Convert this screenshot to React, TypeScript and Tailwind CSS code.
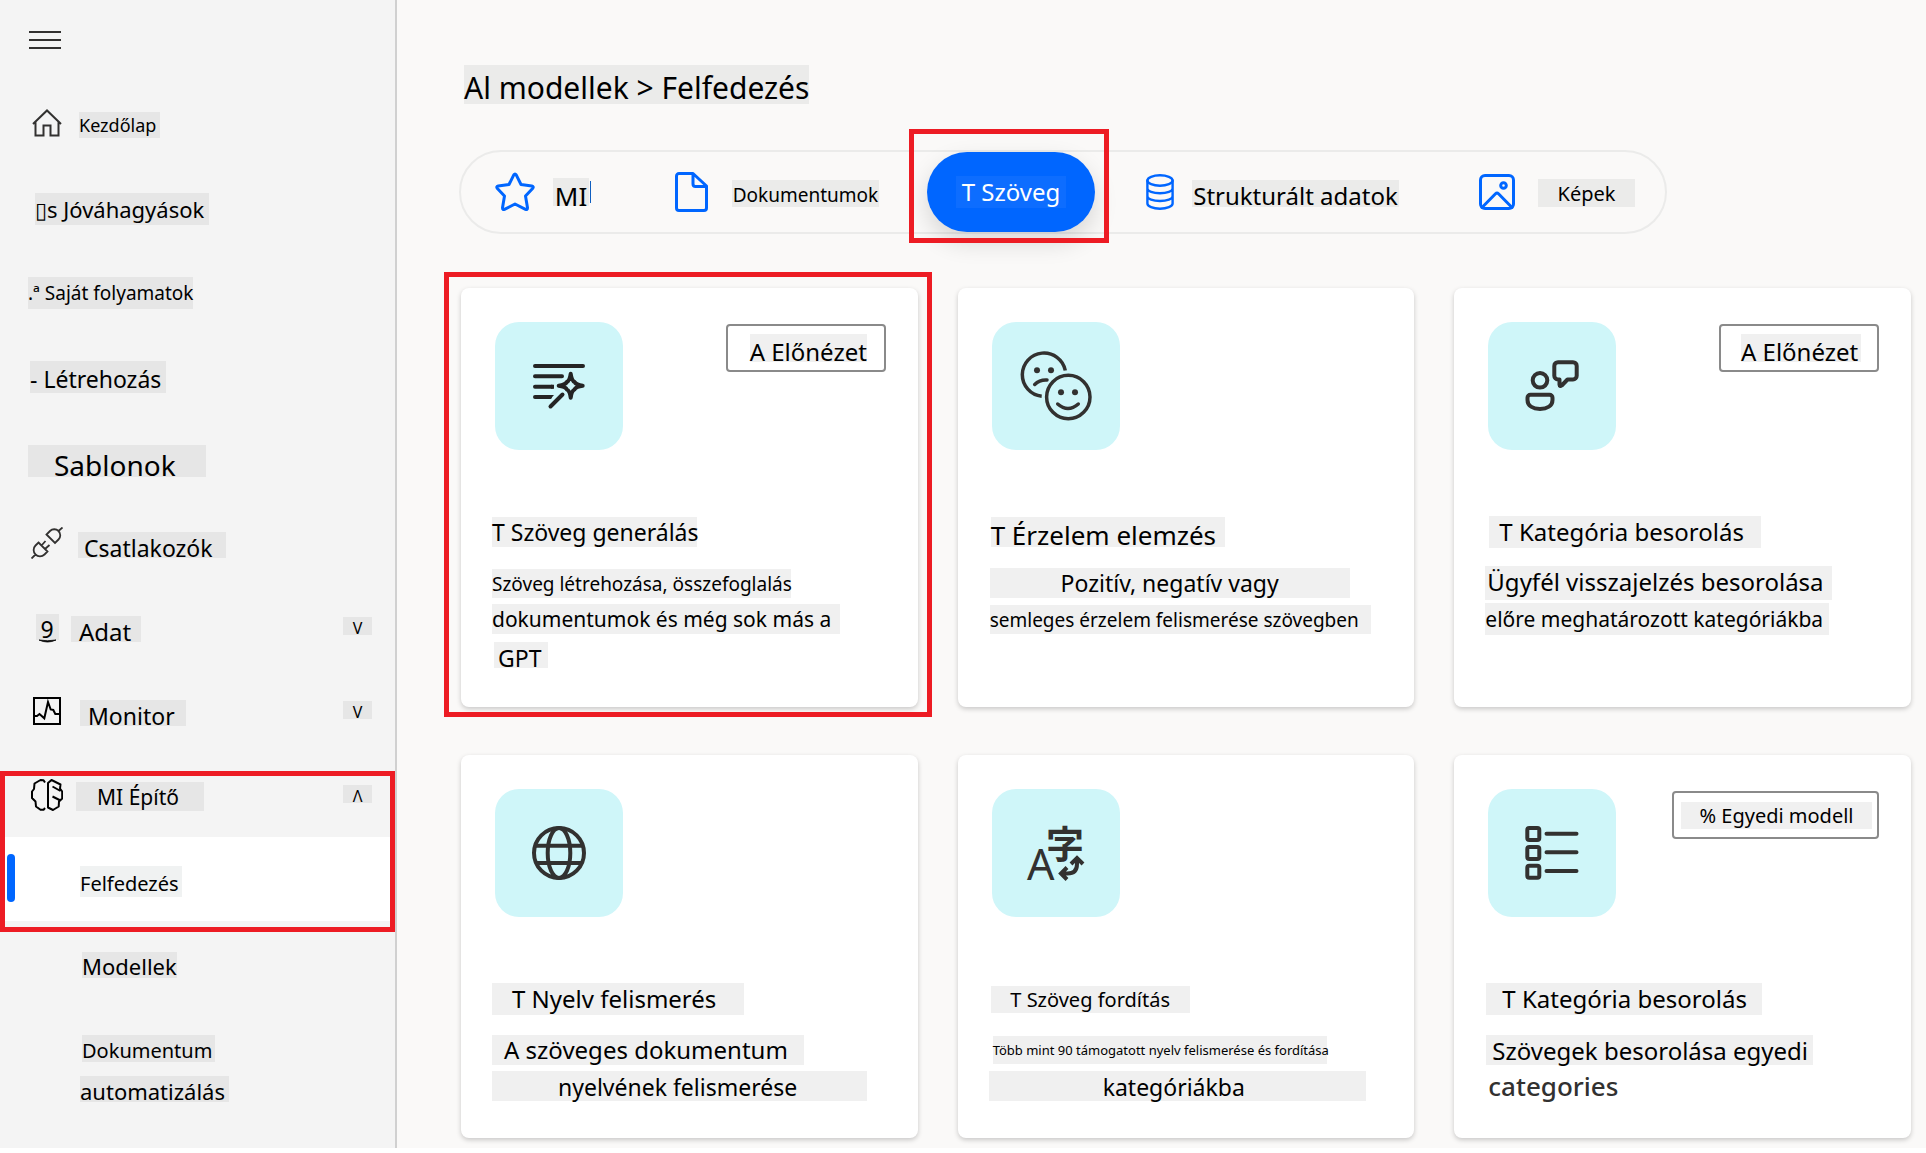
import type { ReactNode } from "react";

/* ---------- shared pieces ---------- */

function Tag({ className, children }: { className: string; children: ReactNode }) {
  return <span className={`block shrink-0 whitespace-nowrap ${className}`}>{children}</span>;
}

/* ---------- sidebar icons ---------- */

const HomeIcon = () => (
  <svg width="30" height="28" viewBox="0 0 30 28" fill="none" stroke="#323130" strokeWidth="2" aria-hidden="true">
    <path d="M1 15 15 1.5 29 15M3.5 13v13.500H11.500V16.500H18.500V26.500H26.500V13" />
  </svg>
);

const PlugIcon = () => (
  <svg width="32" height="32" viewBox="0 0 32 32" fill="none" stroke="#323130" strokeWidth="1.800" aria-hidden="true">
    <path d="M15.500 7.500 24 16l3.500-3.500A6 6 0 0 0 19 4ZM27.500 4 31.500 0.500" />
    <path d="M7.500 15.500l9 9-3 3A6.200 6.200 0 0 1 4.500 18.500ZM10.500 18.500l4-4.500M14 22l4.500-4M4.500 27.500l-4 4" />
  </svg>
);

const DataIcon = () => (
  <span className="relative block h-[26px] w-[23px] bg-[#e6e6e6] text-center text-[23px] leading-[30px] text-black">
    9
    <svg className="absolute -bottom-[3px] left-[3px]" width="17" height="4" viewBox="0 0 17 4" aria-hidden="true">
      <path d="M0 1Q8.500 5 17 1Q8.500 2.500 0 1Z" stroke="#000" strokeWidth="0.800" />
    </svg>
  </span>
);

const MonitorIcon = () => (
  <svg width="28" height="28" viewBox="0 0 28 28" fill="none" stroke="#000" strokeWidth="2" aria-hidden="true">
    <rect x="1" y="1" width="26" height="26" />
    <path d="M1 19h3l2.500-2 4.800 4.300L15 5l2.700 7.500 2.600 0.500 2 4H27" />
  </svg>
);

const BrainIcon = () => (
  <svg width="32" height="32" viewBox="0 0 32 32" fill="none" stroke="#000" strokeWidth="2" strokeLinejoin="round" aria-hidden="true">
    <path d="M14 3.500 12.500 1.200 9.500 1 3.500 4.500 3 10 1 12.500V19l3.500 3.500 0.500 5 4.500 3.300h3L14 29" />
    <path d="M17 4 20.500 1l9 4.500-0.500 4 2.200 3v7L28 22.500l-0.300 5L22 31l-5-2.500ZM21.500 7.500l8 4.500M21.500 17.500l8 4" />
  </svg>
);

/* ---------- sidebar ---------- */

type NavEntry = { text: string; label: string; icon?: ReactNode; row?: string; caret?: "V" | "Λ" };

const NAV: NavEntry[] = [
  { text: "Kezdőlap", icon: <HomeIcon />, label: "ml-4 h-[26px] w-[81px] text-lg leading-[26px]" },
  { text: "▯s Jóváhagyások", row: "pl-[35px]", label: "h-8 w-[174px] text-[22px] leading-8" },
  { text: ".ª Saját folyamatok", row: "pl-7", label: "h-8 w-[165px] text-[19px] leading-8" },
  { text: "- Létrehozás", row: "pl-[30px]", label: "h-8 w-[136px] text-[23px] leading-9" },
  { text: "Sablonok", row: "pl-7", label: "h-8 w-[178px] pl-[26px] text-[28px] leading-10" },
  { text: "Csatlakozók", icon: <PlugIcon />, label: "ml-[15px] h-[26px] w-[148px] pl-1.5 text-[23px] leading-8" },
  { text: "Adat", icon: <DataIcon />, caret: "V", label: "ml-2 h-[26px] w-[70px] pl-2 text-2xl leading-8" },
  { text: "Monitor", icon: <MonitorIcon />, caret: "V", label: "ml-[17px] h-[26px] w-[106px] pl-2 text-[23px] leading-8" },
];

function NavButton({ text, label, icon, row = "pl-[31px]", caret }: NavEntry) {
  return (
    <button type="button" className={`flex h-[84px] w-full items-center pt-[3px] pr-[23px] text-left ${row}`}>
      {icon && <span className="mb-[3px] flex w-8 shrink-0 items-center justify-center">{icon}</span>}
      <Tag className={`bg-[#e6e6e6] ${label}`}>{text}</Tag>
      {caret && (
        <span className="mb-1.5 ml-auto block h-[18px] w-[29px] bg-[#e6e6e6] text-center text-base leading-[22px]" aria-hidden="true">
          {caret}
        </span>
      )}
    </button>
  );
}

function Sidebar() {
  return (
    <nav aria-label="Navigáció" className="w-[397px] shrink-0 border-r-2 border-[#d0d0d0] bg-[#f4f4f4]">
      <div className="h-[81px] pt-[31px] pl-[29px]">
        <button type="button" aria-label="Menü" className="flex w-8 flex-col gap-1.5">
          <span className="h-0.5 w-full bg-[#323130]" />
          <span className="h-0.5 w-full bg-[#323130]" />
          <span className="h-0.5 w-full bg-[#323130]" />
        </button>
      </div>
      {NAV.map((item) => (
        <NavButton key={item.text} {...item} />
      ))}
      <div className="relative">
        <NavButton text="MI Építő" icon={<BrainIcon />} caret="Λ" label="ml-[13px] h-[29px] w-[128px] pl-[21px] text-[21px] leading-[30px]" />
        <a href="#felfedezes" aria-current="page" className="flex h-[84px] items-center bg-white pt-[3px] pl-[7px]">
          <span className="mb-[5px] h-12 w-2 rounded-full bg-[#0066ff]" />
          <Tag className="mt-px ml-[65px] h-[31px] w-[102px] bg-[#f0f2f2] text-xl leading-9">Felfedezés</Tag>
        </a>
        <div className="pointer-events-none absolute inset-x-0 top-[18px] -bottom-[11px] border-[5px] border-[#ed1c24]" />
      </div>
      <a href="#modellek" className="flex h-[84px] items-center pt-[3px] pl-[82px]">
        <Tag className="h-[26px] w-[95px] bg-[#e6e6e6] text-[22px] leading-7">Modellek</Tag>
      </a>
      <a href="#automatizalas" className="flex flex-col items-start gap-3.5 pt-[30px] pb-8 pl-20">
        <Tag className="ml-0.5 h-[27px] w-[133px] bg-[#e6e6e6] text-xl leading-8">Dokumentum</Tag>
        <Tag className="h-[26px] w-[149px] bg-[#e6e6e6] text-[22px] leading-[30px]">automatizálás</Tag>
      </a>
    </nav>
  );
}

/* ---------- tabs ---------- */

const blueIcon = { fill: "none", stroke: "#0066ff", strokeWidth: 3, strokeLinejoin: "round", strokeLinecap: "round" } as const;

const StarIcon = () => (
  <svg width="40" height="40" viewBox="0 0 40 40" {...blueIcon} aria-hidden="true" className="shrink-0">
    <path d="M18.800 2.800q1.200-1.800 2.400 0L26 12.500 36.800 14q2.400 0.600 0.800 2.400L30.500 24 32.500 35.800q0 2.400-2 1.600L20 32 9.500 37.400q-2 0.800-2-1.600L9.500 24 2.400 16.400Q0.800 14.600 3.200 14L14 12.500Z" />
  </svg>
);

const FileIcon = () => (
  <svg width="33" height="40" viewBox="0 0 33 40" {...blueIcon} aria-hidden="true" className="shrink-0">
    <path d="M4 1.500h14L31.500 14v22a2.500 2.500 0 0 1-2.500 2.500H4A2.500 2.500 0 0 1 1.500 36V4A2.500 2.500 0 0 1 4 1.500ZM18 1.500V12a2.500 2.500 0 0 0 2.500 2.500h11" />
  </svg>
);

const DatabaseIcon = () => (
  <svg width="28" height="36" viewBox="0 0 28 36" {...blueIcon} strokeWidth="2.400" aria-hidden="true" className="shrink-0">
    <ellipse cx="14" cy="6.500" rx="12.600" ry="5.200" />
    <path d="M1.400 6.500v23c0 2.900 5.600 5.200 12.600 5.200s12.600-2.300 12.600-5.200v-23M1.400 14.500c0 2.700 5.600 4.800 12.600 4.800s12.600-2.100 12.600-4.800M1.400 22.200c0 2.700 5.600 4.800 12.600 4.800s12.600-2.100 12.600-4.800" />
  </svg>
);

const PictureIcon = () => (
  <svg width="36" height="36" viewBox="0 0 36 36" {...blueIcon} aria-hidden="true" className="shrink-0">
    <rect x="1.500" y="1.500" width="33" height="33" rx="4.500" />
    <circle cx="24.500" cy="11.500" r="2.800" />
    <path d="M3 33.500 16.500 19.800q1.500-1.500 3 0L33 33.500" />
  </svg>
);

function Tabs() {
  return (
    <div role="tablist" aria-label="Modelltípusok" className="mt-[46px] flex h-[84px] w-fit items-center rounded-full border-2 border-[#ebebea] pr-[30px] pl-[34px]">
      <button type="button" role="tab" aria-selected="false" className="mr-[84px] flex items-center">
        <StarIcon />
        <Tag className="ml-[18px] h-7 w-9 bg-[#ebebea] text-[26px] leading-9">MI</Tag>
        <span className="ml-px h-[22px] w-px bg-[#0f5fc0]" />
      </button>
      <button type="button" role="tab" aria-selected="false" className="mr-12 flex items-center">
        <FileIcon />
        <Tag className="mt-0.5 ml-6 h-[27px] w-[147px] bg-[#ebebea] text-[19px] leading-[30px]">Dokumentumok</Tag>
      </button>
      <div className="relative mr-[51px]">
        <button
          type="button"
          role="tab"
          aria-selected="true"
          className="flex h-20 w-[168px] items-center justify-center rounded-full bg-[#0066ff] shadow-[0_10px_24px_rgba(0,0,0,0.14)]"
        >
          <Tag className="h-8 w-[110px] bg-[#0d6dff] text-center text-2xl leading-8 text-white">T Szöveg</Tag>
        </button>
        <div className="pointer-events-none absolute -top-[23px] -right-3.5 -bottom-[11px] -left-[18px] border-[5px] border-[#ed1c24]" />
      </div>
      <button type="button" role="tab" aria-selected="false" className="mr-20 flex items-center">
        <DatabaseIcon />
        <Tag className="mt-0.5 ml-[18px] h-[27px] w-[207px] bg-[#ebebea] text-2xl leading-8">Strukturált adatok</Tag>
      </button>
      <button type="button" role="tab" aria-selected="false" className="flex items-center">
        <PictureIcon />
        <Tag className="mt-0.5 ml-[23px] h-7 w-[97px] bg-[#ebebea] text-center text-xl leading-[30px]">Képek</Tag>
      </button>
    </div>
  );
}

/* ---------- card icons, drawn on the 128px tile ---------- */

function Tile({ color = "#323130", width = 4, children }: { color?: string; width?: number; children: ReactNode }) {
  return (
    <svg
      className="size-32 shrink-0 rounded-3xl bg-[#cff6f9]"
      viewBox="0 0 128 128"
      fill="none"
      stroke={color}
      strokeWidth={width}
      strokeLinecap="round"
      strokeLinejoin="round"
      aria-hidden="true"
    >
      {children}
    </svg>
  );
}

const GenerateTile = () => (
  <Tile color="#242424">
    <path d="M40 44H88M40 54.300H67M55.500 84.500 67.500 72.500" />
    <path d="M57 64.700H40M55 75H40" />
    <path d="M56 62.700h3v4h-3zM55 73h4l-3.500 4H55z" fill="#242424" stroke="none" />
    <path d="M75.700 51.700q1 7 3.800 8.200 1.200 2.800 8.200 3.800-7 1-8.200 3.800-2.800 1.200-3.800 8.200-1-7-3.800-8.200-1.200-2.800-8.200-3.800 7-1 8.200-3.800 2.800-1.200 3.800-8.200Z" />
  </Tile>
);

const SentimentTile = () => (
  <Tile width={3.5}>
    <path d="M73.300 48.500A21.700 21.700 0 1 0 49.700 74.300" strokeLinecap="butt" />
    <circle cx="76.300" cy="75" r="21.700" />
    <path d="M42.700 62.500q5-5 12.300-4.500M65.700 82q10.300 9 20.600 0" />
    <g fill="#323130" stroke="none">
      <circle cx="45" cy="48.300" r="3" />
      <circle cx="59" cy="48.300" r="3" />
      <circle cx="69" cy="70.300" r="3" />
      <circle cx="83" cy="70.300" r="3" />
    </g>
  </Tile>
);

const FeedbackTile = () => (
  <Tile>
    <circle cx="52" cy="58.300" r="7.300" />
    <path d="M42.500 72.700h19a3 3 0 0 1 3 3V78c0 6-5.500 8.900-12.500 8.900S39.500 84 39.500 78v-2.300a3 3 0 0 1 3-3Z" />
    <path d="M70 40.200h15a3.700 3.700 0 0 1 3.700 3.700v9.900a3.700 3.700 0 0 1-3.700 3.700h-5.500l-5.800 6q-2 1.500-2.200-1v-5H70a3.700 3.700 0 0 1-3.700-3.700v-9.900a3.700 3.700 0 0 1 3.700-3.700Z" />
  </Tile>
);

const GlobeTile = () => (
  <Tile>
    <circle cx="64" cy="64" r="25" />
    <ellipse cx="64" cy="64" rx="11.300" ry="25" />
    <path d="M40.500 56.700h47M41.500 74h45" strokeLinecap="butt" />
  </Tile>
);

const TranslateTile = () => (
  <Tile>
    <g fill="#323130" stroke="none">
      <text x="35" y="91" fontSize="43" fontFamily="'Noto Sans', sans-serif">
        A
      </text>
      <text x="54" y="69" fontSize="38" fontWeight="700" fontFamily="'Noto Sans CJK JP', sans-serif">
        字
      </text>
    </g>
    <g strokeLinecap="butt" strokeLinejoin="miter">
      <path d="M79 75 85 69l6 6M85 70v5q0 9.500-9.500 9.500H70M75 78.500l-6 6 6 6" />
    </g>
  </Tile>
);

const ListTile = () => (
  <Tile>
    <rect x="39.300" y="39" width="12" height="12" rx="2" />
    <rect x="39.300" y="58" width="12" height="12" rx="2" />
    <rect x="39.300" y="76.700" width="12" height="12" rx="2" />
    <path d="M58.500 44.700H88.500M58.500 63.300H88.500M58.500 82H88.500" />
  </Tile>
);

/* ---------- cards ---------- */

type Line = { text: string; box: string };
type CardData = { id: string; tile: ReactNode; badge?: Line & { frame: string }; title: Line; lines: Line[] };

const CARDS: CardData[] = [
  {
    id: "generalas",
    tile: <GenerateTile />,
    badge: { text: "A Előnézet", frame: "w-40 pl-[22px]", box: "h-7 w-[117px] text-2xl leading-9" },
    title: { text: "T Szöveg generálás", box: "h-[30px] w-[205px] text-[23px] leading-[30px]" },
    lines: [
      { text: "Szöveg létrehozása, összefoglalás", box: "h-[29px] w-[299px] text-[19px] leading-[30px]" },
      { text: "dokumentumok és még sok más a", box: "h-[30px] w-[348px] text-[21px] leading-[30px]" },
      { text: "GPT", box: "ml-0.5 h-[26px] w-[54px] pl-1 text-[23px] leading-8" },
    ],
  },
  {
    id: "erzelem",
    tile: <SentimentTile />,
    title: { text: "T Érzelem elemzés", box: "ml-0.5 h-[30px] w-[234px] text-[26px] leading-9" },
    lines: [
      { text: "Pozitív, negatív vagy", box: "ml-px h-[30px] w-[360px] text-center text-[23px] leading-[30px]" },
      { text: "semleges érzelem felismerése szövegben", box: "ml-px h-[29px] w-[381px] text-[19px] leading-[30px]" },
    ],
  },
  {
    id: "visszajelzes",
    tile: <FeedbackTile />,
    badge: { text: "A Előnézet", frame: "w-40 pl-5", box: "h-7 w-[120px] text-2xl leading-9" },
    title: { text: "T Kategória besorolás", box: "ml-1 h-8 w-[272px] pl-2.5 text-2xl leading-8" },
    lines: [
      { text: "Ügyfél visszajelzés besorolása", box: "h-[34px] w-[347px] pl-0.5 text-2xl leading-8" },
      { text: "előre meghatározott kategóriákba", box: "h-8 w-[344px] text-[21px] leading-8" },
    ],
  },
  {
    id: "nyelv",
    tile: <GlobeTile />,
    title: { text: "T Nyelv felismerés", box: "h-8 w-[252px] pl-5 text-2xl leading-8" },
    lines: [
      { text: "A szöveges dokumentum", box: "h-[30px] w-[312px] pl-3 text-2xl leading-[30px]" },
      { text: "nyelvének felismerése", box: "h-[30px] w-[375px] pl-[66px] text-[23px] leading-8" },
    ],
  },
  {
    id: "forditas",
    tile: <TranslateTile />,
    title: { text: "T Szöveg fordítás", box: "ml-0.5 h-[27px] w-[199px] text-center text-xl leading-[27px]" },
    lines: [
      { text: "Több mint 90 támogatott nyelv felismerése és fordítása", box: "ml-1 h-7 w-[334px] text-[13px] leading-7" },
      { text: "kategóriákba", box: "h-[30px] w-[377px] pl-[114px] text-[23px] leading-8" },
    ],
  },
  {
    id: "egyedi",
    tile: <ListTile />,
    badge: { text: "% Egyedi modell", frame: "w-[207px] pl-[7px]", box: "h-[27px] w-[191px] text-center text-xl leading-7" },
    title: { text: "T Kategória besorolás", box: "ml-px h-8 w-[276px] pl-4 text-2xl leading-8" },
    lines: [
      { text: "Szövegek besorolása egyedi", box: "ml-px h-[30px] w-[327px] pl-1.5 text-2xl leading-8" },
      { text: "categories", box: "" },
    ],
  },
];

function Card({ tile, badge, title, lines }: CardData) {
  return (
    <article className="rounded-lg bg-white pt-[34px] pb-[34px] pl-[31px] shadow-[0_2px_5px_rgba(0,0,0,0.2)]">
      <div className="flex items-start justify-between pr-8 pl-[3px]">
        {tile}
        {badge && (
          <div className={`mt-0.5 flex h-12 items-center rounded border-2 border-[#8a8a8a] ${badge.frame}`}>
            <Tag className={`bg-[#f0f0f0] ${badge.box}`}>{badge.text}</Tag>
          </div>
        )}
      </div>
      <h2 className="mt-16 flex h-9 items-center">
        <Tag className={`bg-[#f0f0f0] ${title.box}`}>{title.text}</Tag>
      </h2>
      <div className="mt-[15px]">
        {lines.map((line) => (
          <p key={line.text} className="flex h-9 items-center">
            {line.box ? (
              <Tag className={`bg-[#f0f0f0] ${line.box}`}>{line.text}</Tag>
            ) : (
              <span className="pl-[3px] text-[26px] leading-9 font-medium text-[#323130]">{line.text}</span>
            )}
          </p>
        ))}
      </div>
    </article>
  );
}

export default function App() {
  return (
    <div className="bg-white font-['Noto_Sans',sans-serif] text-black">
      <div className="flex">
        <Sidebar />
        <main className="min-w-0 grow bg-[#faf9f8] pt-[65px] pr-[15px] pb-2.5 pl-[62px]">
          <h1 className="ml-[5px] h-[39px] w-[345px] bg-[#ebebea] text-3xl leading-[46px] whitespace-nowrap">Al modellek &gt; Felfedezés</h1>
          <Tabs />
          <div className="mt-[54px] ml-0.5 grid grid-cols-3 gap-x-10 gap-y-12">
            {CARDS.map((card, i) => (
              <div key={card.id} className="relative grid">
                <Card {...card} />
                {i === 0 && (
                  <div className="pointer-events-none absolute -top-4 -right-3.5 -bottom-2.5 -left-[17px] border-[5px] border-[#ed1c24]" />
                )}
              </div>
            ))}
          </div>
        </main>
      </div>
    </div>
  );
}
